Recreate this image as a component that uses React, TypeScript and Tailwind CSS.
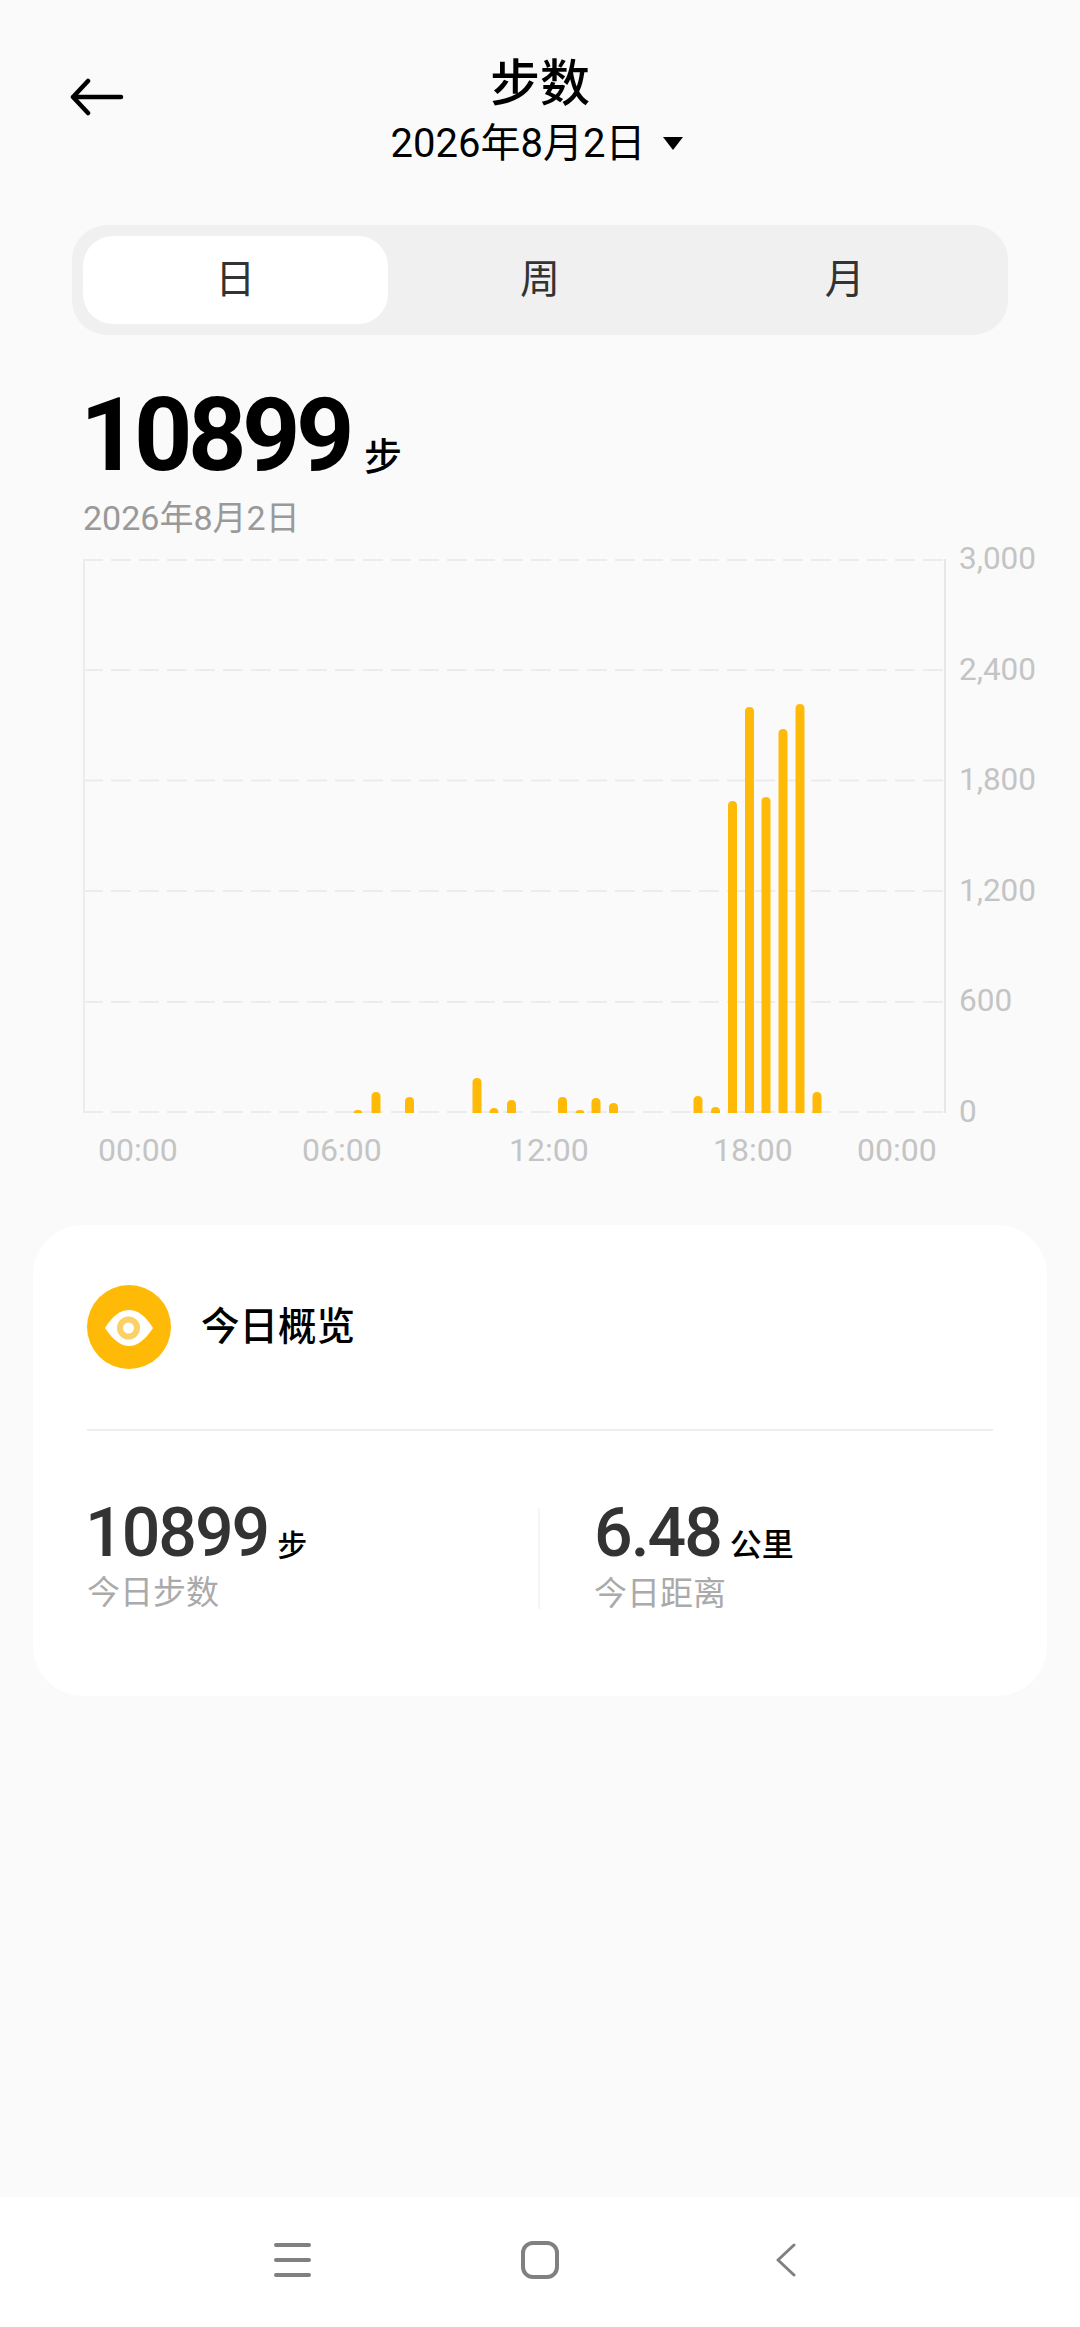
const bars: [number, number][] = [
  [358, 1110],
  [376, 1092],
  [409.5, 1097],
  [477, 1078],
  [494, 1108],
  [511.5, 1100],
  [562.5, 1097],
  [580, 1110],
  [596, 1098],
  [613.5, 1103],
  [698, 1096],
  [715.5, 1107],
  [732.5, 801],
  [749.5, 707],
  [766, 797],
  [783, 729],
  [800, 704],
  [817, 1092],
];

const gridLines = [1, 111, 221.5, 332, 443, 553];
const yLabels = ["3,000", "2,400", "1,800", "1,200", "600", "0"];

function barPath(cx: number, top: number) {
  const y = top - 559;
  const bottom = 554;
  const r = Math.min(4.5, bottom - y);
  return `M${cx - 83 - 4.5} ${bottom}V${y + r}Q${cx - 83 - 4.5} ${y} ${cx - 83} ${y}Q${cx - 83 + 4.5} ${y} ${cx - 83 + 4.5} ${y + r}V${bottom}Z`;
}

function StepsChart() {
  return (
    <svg width="863" height="555" viewBox="0 0 863 555" className="shrink-0">
      {gridLines.map((y) => (
        <line key={y} x1="0" x2="863" y1={y} y2={y} stroke="#ececec" strokeWidth="2" strokeDasharray="20 8" />
      ))}
      <line x1="1" x2="1" y1="0" y2="554" stroke="#ececec" strokeWidth="2" />
      <line x1="862" x2="862" y1="0" y2="554" stroke="#e6e6e6" strokeWidth="2" />
      {bars.map(([cx, top]) => (
        <path key={cx} d={barPath(cx, top)} fill="#ffba08" />
      ))}
    </svg>
  );
}

function Stat({ value, unit, label, valueClass, unitClass }: { value: string; unit: string; label: string; valueClass?: string; unitClass: string }) {
  return (
    <div>
      <div className="flex items-baseline">
        <span className={`text-[68px] leading-[68px] font-medium tracking-[-2px] text-[#333333] ${valueClass ?? ""}`}>{value}</span>
        <span className={`font-medium text-black ${unitClass}`}>{unit}</span>
      </div>
      <p className="mt-[5px] text-[33px] leading-[40px] text-[#aaaaaa]">{label}</p>
    </div>
  );
}

export default function App() {
  return (
    <div className="flex h-screen flex-col overflow-hidden bg-[#fafafa] font-['Roboto','Noto_Sans_CJK_SC',sans-serif] text-black">
      <header className="grid grid-cols-[70px_1fr_70px] px-[70px] pt-[54px]">
        <svg width="54" height="38" viewBox="0 0 54 38" className="mt-[24px]" fill="none" stroke="black" strokeWidth="4.5" strokeLinecap="round" strokeLinejoin="round">
          <path d="M51 19H3M18 3 3 19l15 16" />
        </svg>
        <div className="flex flex-col items-center">
          <h1 className="text-[50px] leading-[60px] font-medium">步数</h1>
          <div className="mt-[6px] mr-[6px] flex items-center text-[40px] leading-[48px]">
            <span>2026年8月2日</span>
            <span className="mt-[-2px] ml-[18px] h-0 w-0 border-x-[10px] border-t-[13px] border-x-transparent border-t-black" />
          </div>
        </div>
      </header>

      <div className="mx-[72px] mt-[57px] flex h-[110px] rounded-[35px] bg-[#f0f0f0] p-[11px] text-[40px] text-[#333333]">
        <div className="flex w-[305px] items-center justify-center rounded-[30px] bg-white">日</div>
        <div className="flex w-[305px] items-center justify-center">周</div>
        <div className="flex w-[305px] items-center justify-center">月</div>
      </div>

      <section className="mt-[40px] pl-[83px]">
        <div className="flex items-baseline">
          <span className="ml-[-3px] text-[102px] leading-[120px] font-bold tracking-[-4.5px]">10899</span>
          <span className="ml-[14px] text-[38px] font-medium">步</span>
        </div>
        <p className="mt-[2px] text-[34px] leading-[42px] text-[#999999]">2026年8月2日</p>

        <div className="mt-[20px] flex">
          <StepsChart />
          <div className="mt-[-18px] ml-[13px] flex h-[589px] flex-col justify-between text-[31.5px] leading-[36px] text-[#c4c4c4]">
            {yLabels.map((label) => (
              <span key={label}>{label}</span>
            ))}
          </div>
        </div>

        <div className="mt-[2px] flex pl-[15px] text-[32px] leading-[36px] text-[#c4c4c4]">
          <span className="w-[204px]">00:00</span>
          <span className="w-[207px]">06:00</span>
          <span className="w-[204px]">12:00</span>
          <span className="w-[144px]">18:00</span>
          <span>00:00</span>
        </div>
      </section>

      <section className="mx-[33px] mt-[57px] h-[471px] rounded-[50px] bg-white px-[54px] pt-[60px]">
        <div className="flex items-center gap-[30px]">
          <svg width="84" height="84" viewBox="0 0 84 84">
            <circle cx="42" cy="42" r="42" fill="#ffba08" />
            <path d="M18 43C26 30 34 25 42 25s16 5 24 18c-8 12-16 18-24 18s-16-6-24-18Z" fill="white" />
            <circle cx="41.5" cy="43" r="8.5" fill="none" stroke="#fbd065" strokeWidth="6" />
          </svg>
          <h2 className="text-[38.5px] font-medium">今日概览</h2>
        </div>
        <div className="mt-[60px] h-[2px] bg-[#eeeeee]" />
        <div className="mt-[68px] flex">
          <div className="w-[451px]">
            <Stat value="10899" unit="步" label="今日步数" valueClass="ml-[-2px]" unitClass="ml-[9px] text-[30px]" />
          </div>
          <div className="mt-[9px] h-[101px] w-[2px] bg-[#f5f5f5]" />
          <div className="pl-[54px]">
            <Stat value="6.48" unit="公里" label="今日距离" unitClass="ml-[9px] text-[32px]" />
          </div>
        </div>
      </section>

      <nav className="mt-auto flex h-[130px] items-center justify-center bg-white pb-[4px]">
        <div className="mr-[11px] flex items-center">
          <svg width="37" height="34" viewBox="0 0 37 34" stroke="#808080" strokeWidth="4" strokeLinecap="round">
            <path d="M2 2h33M2 17h33M2 32h33" />
          </svg>
          <svg width="38" height="38" viewBox="0 0 38 38" className="ml-[210px]" fill="none" stroke="#808080" strokeWidth="4">
            <rect x="2" y="2" width="34" height="34" rx="10" />
          </svg>
          <svg width="20" height="34" viewBox="0 0 20 34" className="ml-[217px]" fill="none" stroke="#808080" strokeWidth="3" strokeLinecap="round" strokeLinejoin="round">
            <path d="M18 2 2 17l16 15" />
          </svg>
        </div>
      </nav>
    </div>
  );
}
